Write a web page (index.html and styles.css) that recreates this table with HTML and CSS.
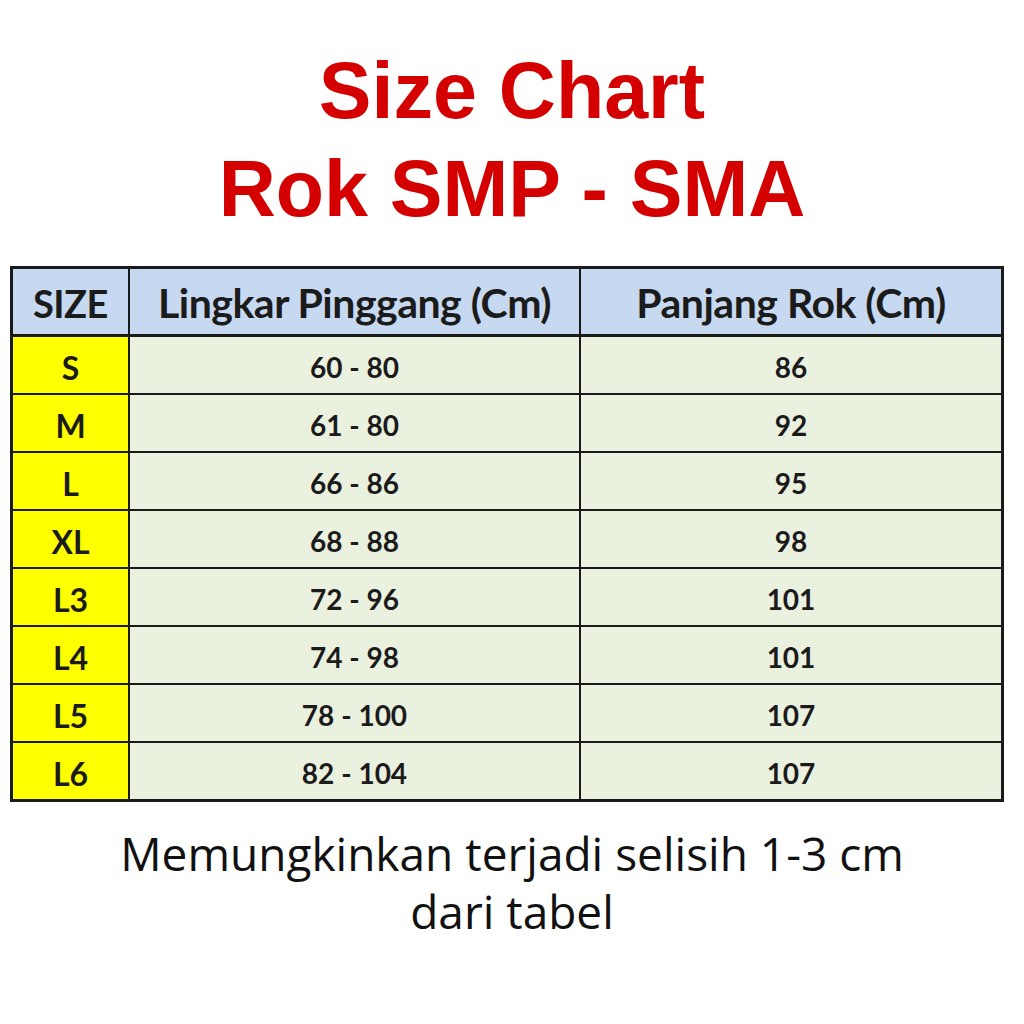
FILE: index.html
```html
<!DOCTYPE html>
<html>
<head>
<meta charset="utf-8">
<link rel="stylesheet" href="styles.css">
</head>
<body>
<div class="page">
  <h1 class="title">Size Chart<br>Rok SMP - SMA</h1>
  <div class="sheet">
    <table class="chart">
      <thead>
        <tr><th class="c-size">SIZE</th><th class="c-waist">Lingkar Pinggang (Cm)</th><th class="c-len">Panjang Rok (Cm)</th></tr>
      </thead>
      <tbody>
        <tr><td class="sz">S</td><td>60 - 80</td><td>86</td></tr>
        <tr><td class="sz">M</td><td>61 - 80</td><td>92</td></tr>
        <tr><td class="sz">L</td><td>66 - 86</td><td>95</td></tr>
        <tr><td class="sz">XL</td><td>68 - 88</td><td>98</td></tr>
        <tr><td class="sz">L3</td><td>72 - 96</td><td>101</td></tr>
        <tr><td class="sz">L4</td><td>74 - 98</td><td>101</td></tr>
        <tr><td class="sz">L5</td><td>78 - 100</td><td>107</td></tr>
        <tr><td class="sz">L6</td><td>82 - 104</td><td>107</td></tr>
      </tbody>
    </table>
  </div>
  <p class="note">Memungkinkan terjadi selisih 1-3 cm<br>dari tabel</p>
</div>
</body>
</html>
```
FILE: styles.css
```css
html, body {
  margin: 0;
  padding: 0;
  background: #ffffff;
}
.page {
  width: 1024px;
  height: 1024px;
  display: flex;
  flex-direction: column;
  align-items: flex-start;
}
.title {
  margin: 0;
  padding-top: 42px;
  width: 1024px;
  text-align: center;
  font-family: "Liberation Sans", Arial, sans-serif;
  font-weight: 700;
  font-size: 79px;
  line-height: 98px;
  color: #d40000;
}
.sheet {
  margin-top: 28px;
  margin-left: 10px;
}
.chart {
  border-collapse: collapse;
  width: 994px;
  table-layout: fixed;
  font-family: Lato, "Open Sans", sans-serif;
  font-weight: 700;
  color: #1b1b1b;
  border: 3px solid #1a1a1a;
}
.chart th {
  height: 63px;
  background: #c6d9f0;
  font-size: 41px;
  font-weight: 700;
  border: 2px solid #1a1a1a;
  border-bottom: 3px solid #1a1a1a;
  padding: 2px 0 0 0;
  letter-spacing: -0.5px;
}
.chart th.c-size {
  font-size: 38px;
}
.c-size { width: 115px; }
.c-waist { width: 449px; }
.c-len { width: auto; }
.chart td {
  height: 52px;
  background: #ebf1df;
  border: 2px solid #1a1a1a;
  text-align: center;
  font-size: 28px;
  padding: 4px 0 0 0;
}
.chart td.sz {
  background: #ffff00;
  font-size: 32px;
}
.note {
  margin: 22px 0 0 0;
  width: 1024px;
  text-align: center;
  font-family: "Open Sans", sans-serif;
  font-weight: 400;
  font-size: 46px;
  line-height: 58px;
  color: #111111;
}
```
